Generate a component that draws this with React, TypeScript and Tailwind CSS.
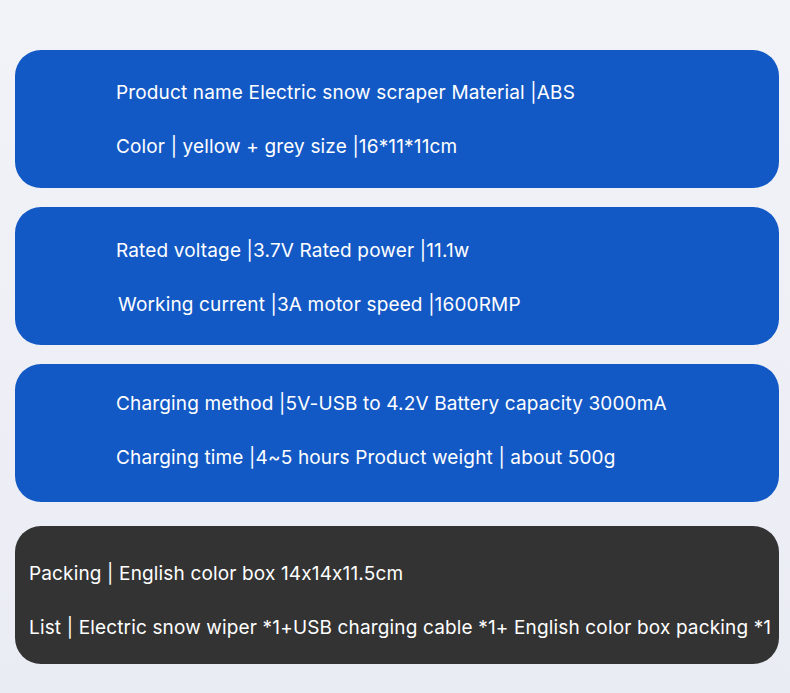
const cards = [
  {
    box: "bg-[#1359c5] pl-[101px] pt-[31px]",
    lines: [
      "Product name Electric snow scraper Material |ABS",
      "Color | yellow + grey size |16*11*11cm",
    ],
  },
  {
    box: "bg-[#1359c5] pl-[101px] pt-[32px] mt-[19px]",
    lines: [
      "Rated voltage |3.7V Rated power |11.1w",
      "Working current |3A motor speed |1600RMP",
    ],
    shiftSecond: true,
  },
  {
    box: "bg-[#1359c5] pl-[101px] pt-[28px] mt-[19px]",
    lines: [
      "Charging method |5V-USB to 4.2V Battery capacity 3000mA",
      "Charging time |4~5 hours Product weight | about 500g",
    ],
  },
  {
    box: "bg-[#333333] pl-[14px] pt-[36px] mt-[24px]",
    lines: [
      "Packing | English color box 14x14x11.5cm",
      "List | Electric snow wiper *1+USB charging cable *1+ English color box packing *1",
    ],
  },
];

export default function App() {
  return (
    <div
      className="w-[790px] h-[693px] bg-gradient-to-b from-[#f2f3f8] to-[#eaecf4] pt-[50px] pl-[15px] pr-[11px] flex flex-col"
      style={{ fontFamily: "Inter, 'Open Sans', sans-serif" }}
    >
      {cards.map((card, i) => (
        <div
          key={i}
          className={`h-[138px] rounded-[26px] flex flex-col gap-[30px] text-white text-[19px] tracking-[0.15px] leading-[24px] ${card.box}`}
        >
          {card.lines.map((line, j) => (
            <div
              key={j}
              className={`whitespace-nowrap ${card.shiftSecond && j === 1 ? "ml-[2px]" : ""}`}
            >
              {line}
            </div>
          ))}
        </div>
      ))}
    </div>
  );
}
